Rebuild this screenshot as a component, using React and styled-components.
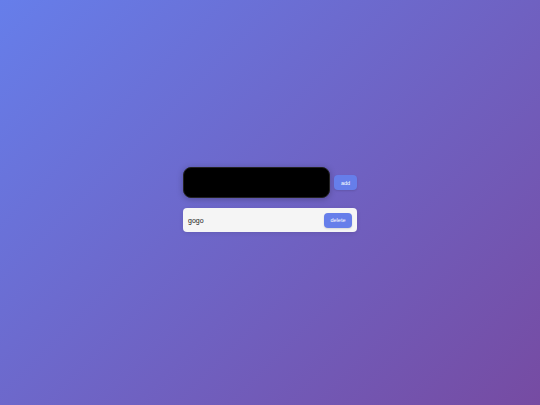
import React, { useState } from "react";
import styled, { createGlobalStyle } from "styled-components";

const GlobalStyle = createGlobalStyle`
  * { box-sizing: border-box; }
  html, body { margin: 0; padding: 0; }
  body {
    font-family: "Liberation Sans", Arial, sans-serif;
    background: linear-gradient(135deg, #667eea 0%, #764ba2 100%);
    min-height: 100vh;
  }
`;

const Page = styled.div`
  min-height: 100vh;
  display: flex;
  align-items: center;
  justify-content: center;
  padding-bottom: 6px;
`;

const Wrap = styled.div`
  width: 174px;
  display: flex;
  flex-direction: column;
  gap: 10px;
`;

const Form = styled.div`
  display: flex;
  align-items: center;
  gap: 4px;
`;

const Input = styled.input`
  width: 147px;
  height: 31px;
  border: 1px solid #222;
  border-radius: 8px;
  background: #000;
  color: #fff;
  outline: none;
  box-shadow: 0 1px 6px rgba(0, 0, 0, 0.25);
  padding: 0 8px;
  font-size: 7px;
`;

const Button = styled.button`
  border: none;
  border-radius: 4px;
  background: #667eea;
  color: #fff;
  font-family: "Liberation Sans", Arial, sans-serif;
  font-size: 5.5px;
  height: 15px;
  width: ${(p) => p.$w}px;
  padding: 0;
  cursor: pointer;
  box-shadow: 0 1px 2px rgba(0, 0, 0, 0.12);
`;

const List = styled.ul`
  list-style: none;
  margin: 0;
  padding: 0;
  display: flex;
  flex-direction: column;
  gap: 6px;
`;

const Item = styled.li`
  height: 24px;
  background: #f5f5f5;
  border-radius: 4px;
  display: flex;
  align-items: center;
  justify-content: space-between;
  padding: 0 5px;
  box-shadow: 0 1px 4px rgba(0, 0, 0, 0.1);
`;

const Label = styled.span`
  font-size: 7px;
  color: #222;
`;

export default function App() {
  const [todos, setTodos] = useState(["gogo"]);
  const [text, setText] = useState("");

  const add = () => {
    if (!text.trim()) return;
    setTodos([...todos, text]);
    setText("");
  };

  return (
    <Page>
      <GlobalStyle />
      <Wrap>
        <Form>
          <Input value={text} onChange={(e) => setText(e.target.value)} />
          <Button $w={23} onClick={add}>add</Button>
        </Form>
        <List>
          {todos.map((t, i) => (
            <Item key={i}>
              <Label>{t}</Label>
              <Button $w={28} onClick={() => setTodos(todos.filter((_, j) => j !== i))}>
                delete
              </Button>
            </Item>
          ))}
        </List>
      </Wrap>
    </Page>
  );
}
